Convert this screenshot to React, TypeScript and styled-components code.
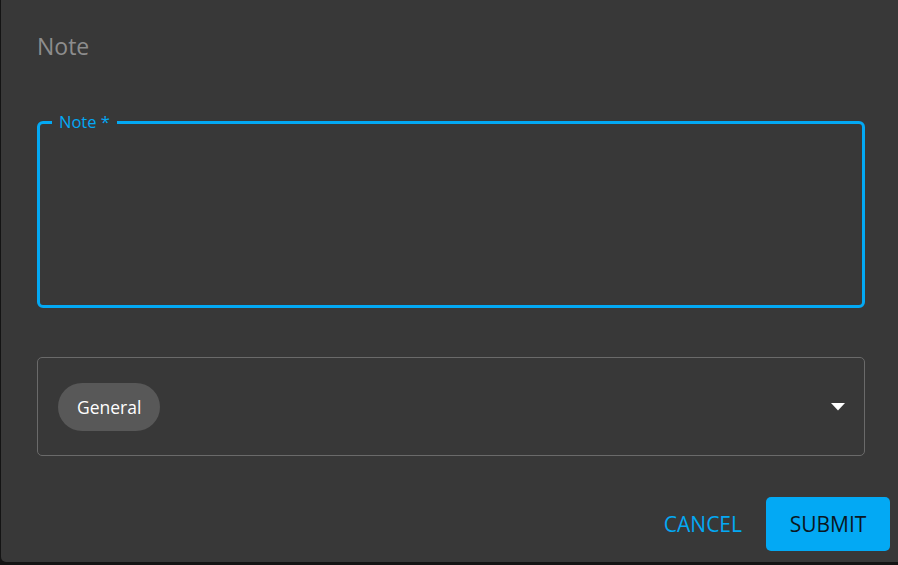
import React from "react";
import styled, { createGlobalStyle } from "styled-components";

const Global = createGlobalStyle`
  html, body { margin: 0; padding: 0; background: #141414; }
  body { font-family: "Open Sans", "Noto Sans", sans-serif; }
  * { box-sizing: border-box; }
`;

const Backdrop = styled.div`
  width: 898px;
  height: 565px;
  padding-left: 1px;
  background: #141414;
`;

const Dialog = styled.div`
  width: 897px;
  height: 562px;
  background: #383838;
  border-bottom-left-radius: 5px;
  display: flex;
  flex-direction: column;
`;

const Title = styled.h2`
  margin: 0;
  padding: 30px 36px 0;
  font-size: 23px;
  line-height: 32px;
  font-weight: 400;
  color: #8d8d8d;
`;

const Content = styled.div`
  display: flex;
  flex-direction: column;
  gap: 49px;
  padding: 0 33px 0 36px;
  margin-top: 59px;
`;

const Field = styled.fieldset`
  margin: -8px 0 0;
  min-width: 0;
  height: 195px;
  padding: 0 11px;
  border-width: 3px;
  border-style: solid;
  border-color: #03a9f4;
  border-radius: 6px;
`;

const Legend = styled.legend`
  padding: 0 7px;
  margin-left: 1px;
  font-size: 16.5px;
  line-height: 18px;
  color: #03a9f4;
`;

const Select = styled.div`
  height: 99px;
  border: 1px solid #6a6a6a;
  border-radius: 5px;
  display: flex;
  align-items: center;
  justify-content: space-between;
  padding: 0 19px 0 20px;
`;

const Chip = styled.span`
  height: 48px;
  padding: 0 19px;
  display: inline-flex;
  align-items: center;
  border-radius: 24px;
  background: #585858;
  color: #ffffff;
  font-size: 17.5px;
`;

const Arrow = styled.svg`
  width: 14px;
  height: 8px;
  display: block;
`;

const Actions = styled.div`
  margin-top: auto;
  display: flex;
  justify-content: flex-end;
  align-items: center;
  gap: 24px;
  padding: 0 8px 11px 0;
`;

const Button = styled.button<{ $primary?: boolean }>`
  font-family: inherit;
  font-size: 21px;
  font-weight: 500;
  letter-spacing: 0;
  height: 54px;
  min-width: 124px;
  padding: 0 12px;
  border: none;
  border-radius: 5px;
  cursor: pointer;
  background: ${(p) => (p.$primary ? "#03a9f4" : "transparent")};
  color: ${(p) => (p.$primary ? "#0b1722" : "#03a9f4")};
  ${(p) => (!p.$primary ? "min-width: 0; padding: 0;" : "")}
`;

export default function App() {
  return (
    <>
      <Global />
      <Backdrop>
        <Dialog>
          <Title>Note</Title>
          <Content>
            <Field>
              <Legend>Note *</Legend>
            </Field>
            <Select>
              <Chip>General</Chip>
              <Arrow viewBox="0 0 14 8">
                <path d="M0 0 L14 0 L7 7.5 Z" fill="#ffffff" />
              </Arrow>
            </Select>
          </Content>
          <Actions>
            <Button>CANCEL</Button>
            <Button $primary>SUBMIT</Button>
          </Actions>
        </Dialog>
      </Backdrop>
    </>
  );
}
